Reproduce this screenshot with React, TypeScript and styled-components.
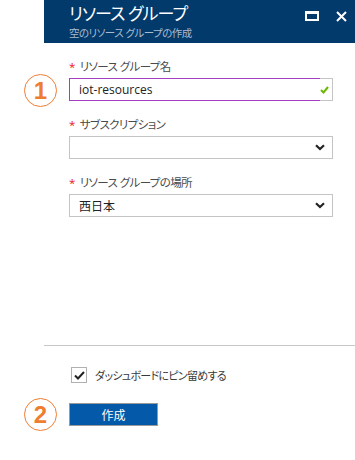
import React from 'react';
import styled, { createGlobalStyle } from 'styled-components';

const GlobalStyle = createGlobalStyle`
  html, body {
    margin: 0;
    padding: 0;
    background: #fff;
  }
  body {
    font-family: 'Open Sans', 'Noto Sans CJK JP', sans-serif;
    font-feature-settings: 'palt';
  }
`;

const Page = styled.div`
  display: flex;
  width: 355px;
  height: 460px;
  position: relative;
  overflow: hidden;
`;

const Gutter = styled.div`
  width: 44px;
  flex-shrink: 0;
`;

const Blade = styled.div`
  flex: 1;
  display: flex;
  flex-direction: column;
`;

const Header = styled.div`
  height: 43px;
  background: #023a6b;
  display: flex;
  justify-content: space-between;
  padding: 0 8px 0 25px;
  box-sizing: border-box;
`;

const TitleBlock = styled.div`
  display: flex;
  flex-direction: column;
`;

const Title = styled.div`
  color: #fff;
  font-size: 17px;
  line-height: 24px;
  margin-top: 2px;
  letter-spacing: -0.9px;
`;

const Subtitle = styled.div`
  color: #a9bbcf;
  font-size: 10.5px;
  line-height: 14px;
  letter-spacing: -0.5px;
`;

const Controls = styled.div`
  display: flex;
  gap: 17px;
  padding-top: 11px;
`;

const MaxIcon = styled.span`
  width: 14px;
  height: 10px;
  box-sizing: border-box;
  border: 2px solid #fff;
  border-top-width: 3px;
`;

const Form = styled.div`
  flex: 1;
  display: flex;
  flex-direction: column;
  gap: 16px;
  padding: 16px 22px 0 25px;
`;

const Field = styled.div`
  position: relative;
  display: flex;
  flex-direction: column;
  gap: 3px;
`;

const Label = styled.div`
  font-size: 11.5px;
  line-height: 16px;
  color: #4a4a4a;
  letter-spacing: -0.6px;
`;

const Star = styled.span`
  color: #e81123;
  margin-right: 5px;
`;

const Box = styled.div`
  height: 23px;
  box-sizing: border-box;
  display: flex;
  align-items: center;
  border: 1px solid #c4c4c4;
  background: #fff;
  font-size: 12px;
  color: #222;
`;

const BoxText = styled.div<{ $valid?: boolean }>`
  flex: 1;
  align-self: stretch;
  display: flex;
  align-items: center;
  padding-left: 9px;
  margin: ${(p) => (p.$valid ? '-1px 0 -1px -1px' : '0')};
  border: ${(p) => (p.$valid ? '1px solid #a43cc4' : 'none')};
  border-right: none;
`;

const Tail = styled.div<{ $wide?: boolean }>`
  width: ${(p) => (p.$wide ? '17px' : '12px')};
  box-sizing: border-box;
  display: flex;
  align-items: center;
  padding-left: ${(p) => (p.$wide ? '0' : '0')};
`;

const Marker = styled.div`
  position: absolute;
  left: -45px;
  width: 31px;
  height: 31px;
  border: 1.2px solid #ef7d2f;
  border-radius: 50%;
  color: #ef7d2f;
  font-family: 'Liberation Sans', sans-serif;
  font-weight: bold;
  font-size: 24px;
  display: flex;
  align-items: center;
  justify-content: center;
`;

const Footer = styled.div`
  border-top: 1px solid #c8c8c8;
  padding: 21px 0 34px 25px;
  display: flex;
  flex-direction: column;
  gap: 20px;
`;

const CheckRow = styled.label`
  display: flex;
  align-items: center;
  gap: 8px;
  padding-left: 2px;
  font-size: 11px;
  color: #3a3a3a;
  letter-spacing: -0.7px;
`;

const CheckBox = styled.span`
  width: 16px;
  height: 16px;
  box-sizing: border-box;
  border: 1px solid #b0b0b0;
  display: flex;
  align-items: center;
  justify-content: center;
`;

const ButtonRow = styled.div`
  position: relative;
  display: flex;
  align-items: center;
`;

const CreateButton = styled.button`
  width: 89px;
  height: 23px;
  background: #0559a9;
  border: 1px solid #9a9a9a;
  color: #fff;
  font-family: inherit;
  font-size: 12px;
  padding: 0;
`;

const Chevron = () => (
  <svg width="10" height="7" viewBox="0 0 10 7">
    <path d="M1 1.2 L5 5 L9 1.2" fill="none" stroke="#222" strokeWidth="2.2" />
  </svg>
);

export default function App() {
  return (
    <Page>
      <GlobalStyle />
      <Gutter />
      <Blade>
        <Header>
          <TitleBlock>
            <Title>リソース グループ</Title>
            <Subtitle>空のリソース グループの作成</Subtitle>
          </TitleBlock>
          <Controls>
            <MaxIcon />
            <svg width="11" height="11" viewBox="0 0 11 11">
              <path d="M1 1 L10 10 M10 1 L1 10" stroke="#fff" strokeWidth="2" />
            </svg>
          </Controls>
        </Header>
        <Form>
          <Field>
            <Marker style={{ top: 15 }}>1</Marker>
            <Label>
              <Star>*</Star>リソース グループ名
            </Label>
            <Box>
              <BoxText $valid>iot-resources</BoxText>
              <Tail>
                <svg width="9" height="8" viewBox="0 0 9 8">
                  <path d="M1 4 L3.5 6.5 L8 1" fill="none" stroke="#6bb700" strokeWidth="2" />
                </svg>
              </Tail>
            </Box>
          </Field>
          <Field>
            <Label>
              <Star>*</Star>サブスクリプション
            </Label>
            <Box>
              <BoxText />
              <Tail $wide>
                <Chevron />
              </Tail>
            </Box>
          </Field>
          <Field>
            <Label>
              <Star>*</Star>リソース グループの場所
            </Label>
            <Box>
              <BoxText>西日本</BoxText>
              <Tail $wide>
                <Chevron />
              </Tail>
            </Box>
          </Field>
        </Form>
        <Footer>
          <CheckRow>
            <CheckBox>
              <svg width="11" height="9" viewBox="0 0 11 9">
                <path d="M1 4.5 L4 7.5 L10 1" fill="none" stroke="#222" strokeWidth="2" />
              </svg>
            </CheckBox>
            ダッシュボードにピン留めする
          </CheckRow>
          <ButtonRow>
            <Marker style={{ top: -5 }}>2</Marker>
            <CreateButton>作成</CreateButton>
          </ButtonRow>
        </Footer>
      </Blade>
    </Page>
  );
}
